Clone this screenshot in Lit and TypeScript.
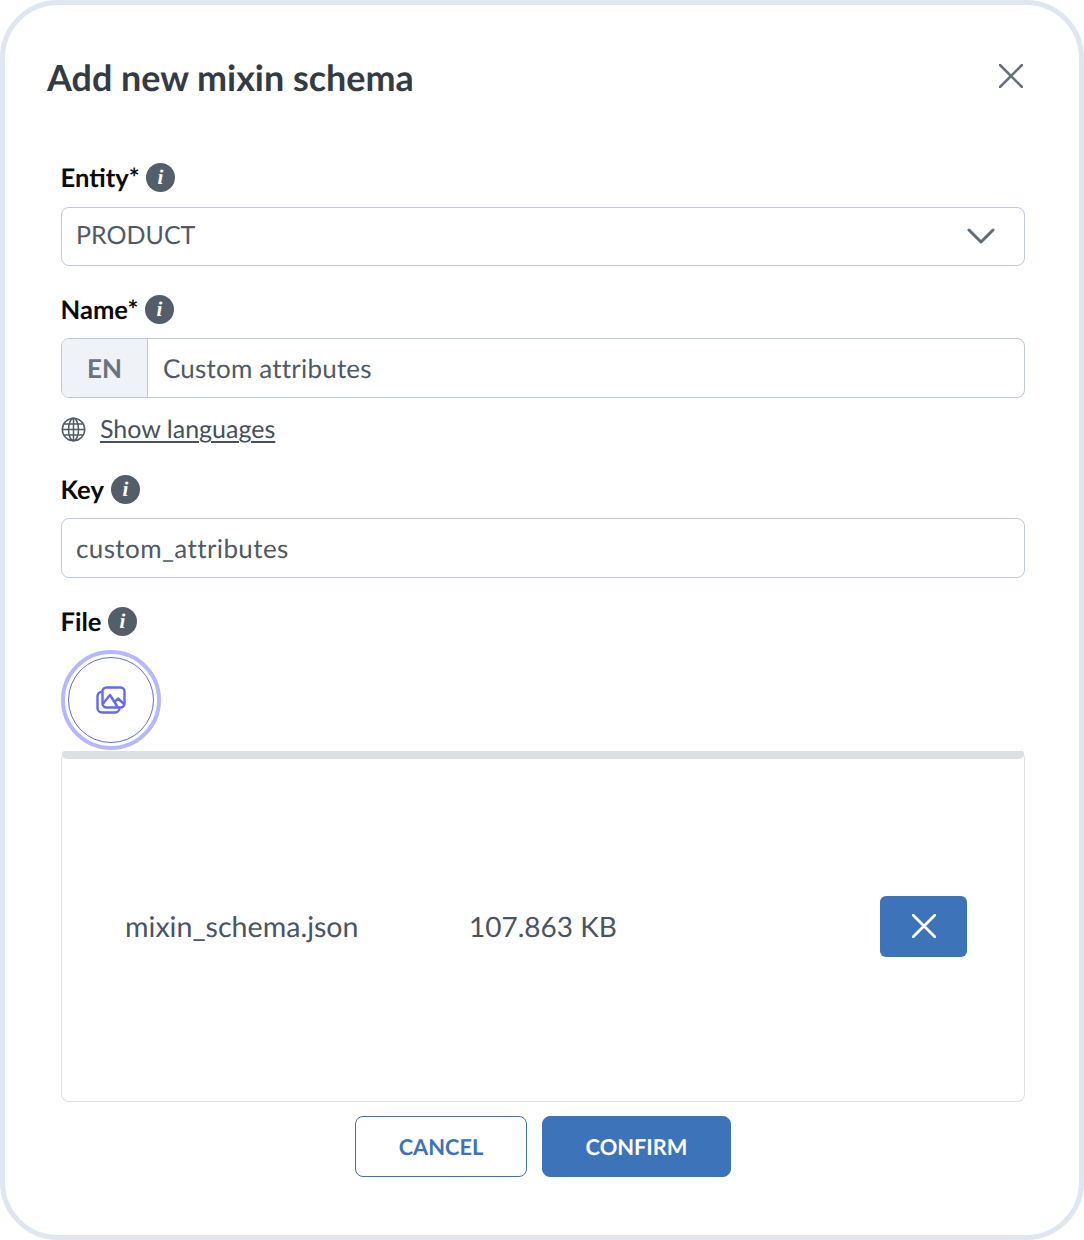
import { LitElement, html, css } from "lit";
import { customElement } from "lit/decorators.js";

const info = html`<span class="info"><svg width="29" height="29" viewBox="0 0 29 29"><circle cx="14.5" cy="14.5" r="14.5" fill="#545e68"/><text x="14.5" y="21" text-anchor="middle" font-family="Liberation Serif, serif" font-style="italic" font-weight="700" font-size="21" fill="#fff">i</text></svg></span>`;

const xIcon = (size: number, color: string, sw: number) => html`<svg width=${size} height=${size} viewBox="0 0 24 24" fill="none" stroke=${color} stroke-width=${sw} stroke-linecap="round"><path d="M1 1 L23 23 M23 1 L1 23"/></svg>`;

@customElement("app-root")
export class AppRoot extends LitElement {
  static styles = css`
    :host { display: block; width: 1084px; height: 1240px; font-family: Lato, sans-serif; text-rendering: geometricPrecision; }
    .frame { box-sizing: border-box; width: 1084px; height: 1240px; border: 5px solid #dfe6ef; border-radius: 58px; background: #fff; padding: 0 54px 0 56px; position: relative; display: flex; flex-direction: column; }
    .head { display: flex; justify-content: space-between; align-items: center; height: 36px; margin: 54px 0 0 -14px; }
    h1 { margin: 1px 0 0 0; font-size: 35.9px; font-weight: 700; color: #343b43; line-height: 36px; }
    .close { display: flex; margin: -3px 0 0 0; transform: translateX(-2px); }
    .label { display: flex; align-items: center; gap: 6.6px; height: 29px; font-size: 25.6px; font-weight: 700; color: #0a0a0a; }
    .label span.t { margin-left: -0.5px; }
    .info { display: flex; }
    .l1 { margin-top: 68px; }
    .l2 { margin-top: 29px; }
    .l3 { margin-top: 31px; }
    .l4 { margin-top: 29px; }
    .field { box-sizing: border-box; height: 60px; border: 1px solid #bccadc; border-radius: 8px; display: flex; align-items: center; font-size: 26px; color: #505a64; margin-top: 14px; background: #fff; overflow: hidden; }
    .select { height: 59px; padding: 0 29px 0 15px; justify-content: space-between; margin-top: 15px; font-size: 25px; }
    .select .v { margin-top: -4px; margin-left: -1px; }
    .select svg { margin-top: -2px; }
    .field.plain { padding-left: 14px; letter-spacing: 0.4px; }
    .lang { box-sizing: border-box; width: 86px; height: 100%; background: #eff2f7; border-right: 1px solid #bccadc; display: flex; align-items: center; justify-content: center; font-weight: 700; color: #68737f; }
    .val { padding-left: 15px; letter-spacing: 0.2px; }
    .show { display: flex; align-items: center; gap: 14px; height: 30px; margin-top: 16px; font-size: 25px; color: #46505a; }
    .show a { text-decoration: underline; text-decoration-thickness: 2px; text-underline-offset: 3px; }
    .upload { box-sizing: border-box; width: 100px; height: 100px; border-radius: 50%; border: 4px solid #b5b8fb; padding: 3px; margin-top: 14px; background: #fff; }
    .upload div { box-sizing: border-box; width: 100%; height: 100%; border: 1px solid #6369f1; border-radius: 50%; display: flex; align-items: center; justify-content: center; }
    .upload svg { margin: 0 0 1px 0; }
    .box { box-sizing: border-box; height: 351px; margin-top: 1px; border: 1px solid #dedfe2; border-top: 0; border-radius: 8px; display: flex; flex-direction: column; }
    .bar { height: 8px; background: #dce0e4; border-radius: 3px 3px 6px 6px; }
    .row { flex: 1; display: flex; align-items: center; font-size: 28px; color: #4b555f; padding-left: 63px; padding-bottom: 8px; position: relative; }
    .fname { width: 344px; font-size: 28.6px; margin-top: 1px; }
    .x { margin-left: auto; margin-right: 57px; width: 87px; height: 61px; background: #3c73b9; border-radius: 6px; display: flex; align-items: center; justify-content: center; }
    .actions { display: flex; justify-content: center; gap: 15px; margin-top: 14px; }
    .btn { box-sizing: border-box; height: 61px; border-radius: 8px; font-size: 21.8px; font-weight: 700; display: flex; align-items: center; justify-content: center; border: 1px solid #3c73b9; padding-bottom: 1px; }
    .cancel { width: 172px; color: #3c73b9; background: #fff; }
    .confirm { width: 189px; color: #fff; background: #3c73b9; }
  `;

  render() {
    return html`<div class="frame">
      <div class="head"><h1>Add new mixin schema</h1><span class="close">${xIcon(24, "#68727c", 2.6)}</span></div>
      <div class="label l1"><span class="t">Entity*</span> ${info}</div>
      <div class="field select"><span class="v">PRODUCT</span>
        <svg width="28" height="16" viewBox="0 0 28 16" fill="none" stroke="#616b75" stroke-width="3" stroke-linecap="round" stroke-linejoin="round"><path d="M2 2 L14 14 L26 2"/></svg>
      </div>
      <div class="label l2"><span class="t">Name*</span> ${info}</div>
      <div class="field"><span class="lang">EN</span><span class="val">Custom attributes</span></div>
      <div class="show">
        <svg width="25" height="25" viewBox="0 0 25 25" fill="none" stroke="#505a64" stroke-width="1.5">
          <circle cx="12.5" cy="12.5" r="11.2"/><ellipse cx="12.5" cy="12.5" rx="5" ry="11.2"/>
          <path d="M12.5 1.3 V23.7 M1.3 12.5 H23.7 M3 7 H22 M3 18 H22"/>
        </svg>
        <a>Show languages</a>
      </div>
      <div class="label l3"><span class="t">Key</span> ${info}</div>
      <div class="field plain">custom_attributes</div>
      <div class="label l4"><span class="t">File</span> ${info}</div>
      <div class="upload"><div>
        <svg width="30" height="28" viewBox="0 0 30 28" fill="none" stroke="#6369f1" stroke-width="2.4" stroke-linecap="round" stroke-linejoin="round">
          <rect x="6.5" y="1.5" width="22" height="20" rx="4"/>
          <path d="M6 6 H5.5 A4 4 0 0 0 1.5 10 V22 A4.5 4.5 0 0 0 6 26.5 H19 A4.5 4.5 0 0 0 23.5 22"/>
          <path d="M7.5 17 L14 9 L21 20 M18.5 16 L22 12.5 L28 18"/>
        </svg>
      </div></div>
      <div class="box">
        <div class="bar"></div>
        <div class="row">
          <span class="fname">mixin_schema.json</span>
          <span>107.863 KB</span>
          <span class="x">${xIcon(24, "#fff", 2.8)}</span>
        </div>
      </div>
      <div class="actions">
        <div class="btn cancel">CANCEL</div>
        <div class="btn confirm">CONFIRM</div>
      </div>
    </div>`;
  }
}
